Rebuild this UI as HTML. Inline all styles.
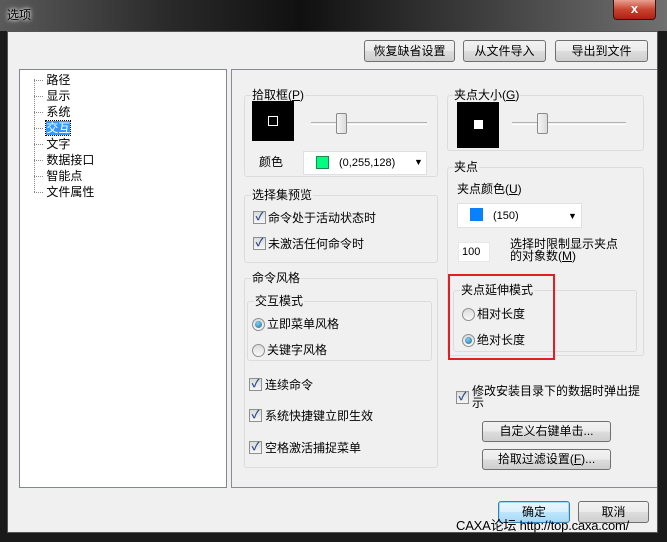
<!DOCTYPE html>
<html><head><meta charset="utf-8"><style>
*{box-sizing:border-box;margin:0;padding:0}
body{width:667px;height:542px;position:relative;overflow:hidden;background:#1a1a1a;font-family:"Liberation Sans","Noto Sans CJK SC",sans-serif;font-size:12px;color:#000}
.a{position:absolute}
.btn{position:absolute;border:1px solid #707070;border-radius:3px;background:linear-gradient(#f2f2f2,#ebebeb 50%,#dddddd 51%,#cfcfcf);text-align:center;line-height:20px;font-size:12px}
.grp{position:absolute;border:1px solid #dcdcdc;border-radius:3px}
.lg{position:absolute;background:#f0f0f0;padding:0 1px;line-height:14px}
.cb{position:absolute;width:13px;height:13px;border:1px solid #8e8f8f;background:linear-gradient(#dcdcdc,#f6f6f6);color:#2a4a8a;font-size:11px;line-height:11px;text-align:center;font-weight:bold}
.rd{position:absolute;width:13px;height:13px;border:1px solid #8e8f8f;border-radius:50%;background:linear-gradient(#dcdcdc,#f8f8f8)}
.rd.on::after{content:"";position:absolute;left:2px;top:2px;width:7px;height:7px;border-radius:50%;background:radial-gradient(circle at 40% 35%,#7fd0f0,#1a6a9a)}
.t{position:absolute;line-height:14px;white-space:nowrap}
.sl{position:absolute;height:3px;border-top:1px solid #b0b0b0;border-bottom:1px solid #fff}
.th{position:absolute;width:11px;height:21px;border:1px solid #8a8a8a;border-radius:2px;background:linear-gradient(90deg,#f4f4f4,#dcdcdc)}
.tr span.d{display:inline-block;width:9px;border-top:1px dotted #888;vertical-align:middle}
</style></head><body>
<div class="a" style="left:0;top:0;width:667px;height:31px;background:linear-gradient(90deg,#5a5a5a 0%,#2a2a2a 25%,#101010 45%,#3a3a3a 70%,#707070 100%)"></div>
<div class="t" style="left:7px;top:8px;color:#000;text-shadow:0 0 6px #fff,0 0 3px #fff">选项</div>
<div class="a" style="left:613px;top:0;width:43px;height:20px;border:1px solid #3a1010;border-top:none;border-radius:0 0 4px 4px;background:linear-gradient(#e8a090,#c84530 50%,#b02010);color:#fff;font-weight:bold;text-align:center;line-height:18px;font-size:13px">x</div>
<div class="a" style="left:7px;top:31px;width:651px;height:502px;background:#f0f0f0;border:1px solid #555"></div>
<div class="btn" style="left:364px;top:40px;width:91px;height:22px">恢复缺省设置</div>
<div class="btn" style="left:463px;top:40px;width:83px;height:22px">从文件导入</div>
<div class="btn" style="left:555px;top:40px;width:93px;height:22px">导出到文件</div>
<!-- tree -->
<div class="a" style="left:19px;top:69px;width:208px;height:419px;background:#fff;border:1px solid #828790"></div>
<div class="a" style="left:34px;top:79px;height:113px;border-left:1px dotted #888"></div>
<div class="a tr" style="left:34px;top:72px;line-height:16px;font-size:12px">
<div style="height:16px"><span class="d"></span> 路径</div>
<div style="height:16px"><span class="d"></span> 显示</div>
<div style="height:16px"><span class="d"></span> 系统</div>
<div style="height:16px"><span class="d"></span> <span style="background:#3399ff;color:#fff;outline:1px dotted #000">交互</span></div>
<div style="height:16px"><span class="d"></span> 文字</div>
<div style="height:16px"><span class="d"></span> 数据接口</div>
<div style="height:16px"><span class="d"></span> 智能点</div>
<div style="height:16px"><span class="d"></span> 文件属性</div>
</div>
<!-- right panel -->
<div class="a" style="left:231px;top:69px;width:426px;height:419px;border:1px solid #898c95;border-right:none;background:#f0f0f0"></div>
<div class="grp" style="left:244px;top:95px;width:194px;height:82px"></div>
<div class="lg" style="left:251px;top:88px">拾取框(<u>P</u>)</div>
<div class="a" style="left:252px;top:101px;width:42px;height:40px;background:#000"></div>
<div class="a" style="left:268px;top:116px;width:10px;height:10px;border:1px solid #fff"></div>
<div class="sl" style="left:311px;top:122px;width:116px"></div>
<div class="th" style="left:336px;top:113px"></div>
<div class="t" style="left:259px;top:155px">颜色</div>
<div class="a" style="left:303px;top:151px;width:124px;height:24px;background:#fff;border:1px solid #e0e0e0"></div>
<div class="a" style="left:316px;top:156px;width:13px;height:13px;background:#00ff80;border:1px solid #1a8a50"></div>
<div class="t" style="left:339px;top:156px;font-size:11px">(0,255,128)</div>
<div class="t" style="left:414px;top:155px;font-size:9px">▼</div>

<div class="grp" style="left:244px;top:195px;width:194px;height:68px"></div>
<div class="lg" style="left:251px;top:188px">选择集预览</div>
<div class="cb" style="left:253px;top:211px">✓</div><div class="t" style="left:268px;top:211px">命令处于活动状态时</div>
<div class="cb" style="left:253px;top:237px">✓</div><div class="t" style="left:268px;top:237px">未激活任何命令时</div>

<div class="grp" style="left:244px;top:278px;width:194px;height:190px"></div>
<div class="lg" style="left:251px;top:271px">命令风格</div>
<div class="grp" style="left:247px;top:301px;width:185px;height:60px"></div>
<div class="lg" style="left:254px;top:294px">交互模式</div>
<div class="rd on" style="left:252px;top:318px"></div><div class="t" style="left:267px;top:317px">立即菜单风格</div>
<div class="rd" style="left:252px;top:344px"></div><div class="t" style="left:267px;top:343px">关键字风格</div>
<div class="cb" style="left:249px;top:378px">✓</div><div class="t" style="left:265px;top:378px">连续命令</div>
<div class="cb" style="left:249px;top:409px">✓</div><div class="t" style="left:265px;top:409px">系统快捷键立即生效</div>
<div class="cb" style="left:249px;top:441px">✓</div><div class="t" style="left:265px;top:441px">空格激活捕捉菜单</div>

<div class="grp" style="left:447px;top:95px;width:197px;height:56px"></div>
<div class="lg" style="left:453px;top:88px">夹点大小(<u>G</u>)</div>
<div class="a" style="left:457px;top:102px;width:42px;height:46px;background:#000"></div>
<div class="a" style="left:474px;top:120px;width:9px;height:9px;background:#fff"></div>
<div class="sl" style="left:512px;top:122px;width:114px"></div>
<div class="th" style="left:537px;top:113px"></div>

<div class="grp" style="left:447px;top:167px;width:197px;height:189px"></div>
<div class="lg" style="left:453px;top:160px">夹点</div>
<div class="t" style="left:457px;top:182px">夹点颜色(<u>U</u>)</div>
<div class="a" style="left:457px;top:203px;width:125px;height:25px;background:#fff;border:1px solid #e0e0e0"></div>
<div class="a" style="left:470px;top:208px;width:13px;height:13px;background:#0a80ff"></div>
<div class="t" style="left:493px;top:209px;font-size:11px">(150)</div>
<div class="t" style="left:568px;top:209px;font-size:9px">▼</div>
<div class="a" style="left:458px;top:242px;width:32px;height:20px;background:#fff;border:1px solid #e8e8e8;font-size:11px;line-height:18px;padding-left:3px">100</div>
<div class="t" style="left:510px;top:238px;line-height:12px">选择时限制显示夹点<br>的对象数(<u>M</u>)</div>
<div class="grp" style="left:453px;top:290px;width:184px;height:62px"></div>
<div class="lg" style="left:460px;top:283px">夹点延伸模式</div>
<div class="rd" style="left:462px;top:308px"></div><div class="t" style="left:477px;top:307px">相对长度</div>
<div class="rd on" style="left:462px;top:334px"></div><div class="t" style="left:477px;top:333px">绝对长度</div>
<div class="a" style="left:448px;top:274px;width:107px;height:86px;border:2px solid #e02020"></div>

<div class="cb" style="left:456px;top:391px">✓</div>
<div class="t" style="left:472px;top:385px;line-height:12px">修改安装目录下的数据时弹出提<br>示</div>
<div class="btn" style="left:482px;top:421px;width:129px;height:21px;line-height:19px">自定义右键单击...</div>
<div class="btn" style="left:482px;top:449px;width:129px;height:21px;line-height:19px">拾取过滤设置(<u>F</u>)...</div>

<div class="btn" style="left:498px;top:501px;width:72px;height:22px;border-color:#3c7fb1;background:linear-gradient(#eaf6fd,#d9f0fc 50%,#bee6fd 51%,#a7d9f5);box-shadow:0 0 0 1px #9fd8f5 inset">确定</div>
<div class="btn" style="left:578px;top:501px;width:71px;height:22px">取消</div>
<div class="t" style="left:456px;top:518px;font-size:13px;line-height:16px;letter-spacing:-0.2px;color:#000">CAXA论坛 http://top.caxa.com/</div>
</body></html>
